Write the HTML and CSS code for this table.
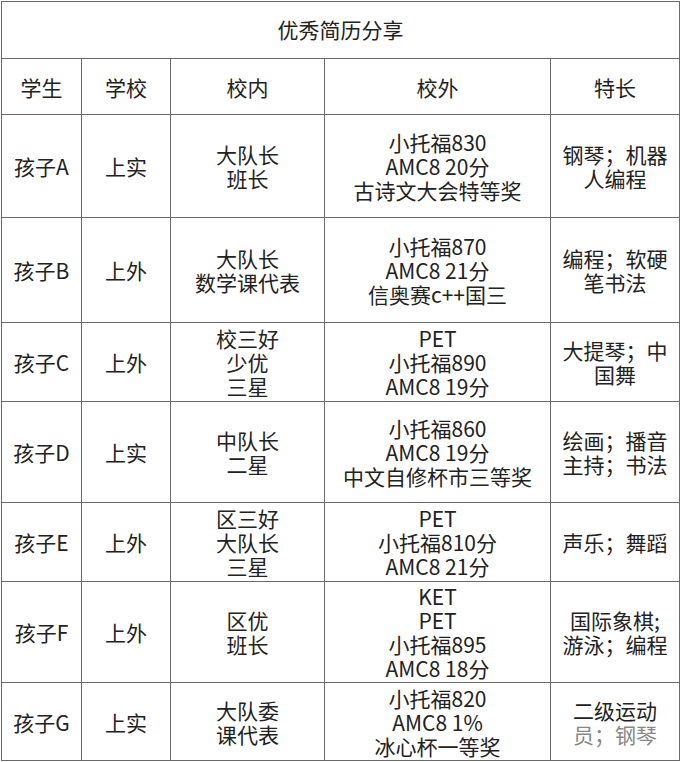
FILE: index.html
```html
<!DOCTYPE html>
<html lang="zh-CN">
<head>
<meta charset="utf-8">
<title>优秀简历分享</title>
<link rel="stylesheet" href="styles.css">
</head>
<body>
<table class="resume">
  <colgroup>
    <col class="c1"><col class="c2"><col class="c3"><col class="c4"><col class="c5">
  </colgroup>
  <tr class="r-title"><td colspan="5">优秀简历分享</td></tr>
  <tr class="r-head"><td>学生</td><td>学校</td><td>校内</td><td>校外</td><td>特长</td></tr>
  <tr class="r-a"><td>孩子A</td><td>上实</td><td>大队长<br>班长</td><td>小托福830<br>AMC8 20分<br>古诗文大会特等奖</td><td>钢琴；机器<br>人编程</td></tr>
  <tr class="r-b"><td>孩子B</td><td>上外</td><td>大队长<br>数学课代表</td><td>小托福870<br>AMC8 21分<br>信奥赛c++国三</td><td>编程；软硬<br>笔书法</td></tr>
  <tr class="r-c"><td>孩子C</td><td>上外</td><td>校三好<br>少优<br>三星</td><td>PET<br>小托福890<br>AMC8 19分</td><td>大提琴；中<br>国舞</td></tr>
  <tr class="r-d"><td>孩子D</td><td>上实</td><td>中队长<br>二星</td><td>小托福860<br>AMC8 19分<br>中文自修杯市三等奖</td><td>绘画；播音<br>主持；书法</td></tr>
  <tr class="r-e"><td>孩子E</td><td>上外</td><td>区三好<br>大队长<br>三星</td><td>PET<br>小托福810分<br>AMC8 21分</td><td>声乐；舞蹈</td></tr>
  <tr class="r-f"><td>孩子F</td><td>上外</td><td>区优<br>班长</td><td>KET<br>PET<br>小托福895<br>AMC8 18分</td><td>国际象棋;<br>游泳；编程</td></tr>
  <tr class="r-g"><td>孩子G</td><td>上实</td><td>大队委<br>课代表</td><td>小托福820<br>AMC8 1%<br>冰心杯一等奖</td><td>二级运动<br><span class="faded">员；钢琴</span></td></tr>
</table>
</body>
</html>
```

FILE: styles.css
```css
html, body {
  margin: 0;
  padding: 0;
  background: #ffffff;
}

body {
  padding: 1px 0 0 1px;
  font-family: "Noto Sans CJK SC", "Noto Sans", sans-serif;
  color: #222222;
}

.resume {
  border-collapse: collapse;
  table-layout: fixed;
  width: 678px;
  font-size: 21px;
  line-height: 24px;
}

.c1 { width: 80px; }
.c2 { width: 89px; }
.c3 { width: 154px; }
.c4 { width: 226px; }
.c5 { width: 129px; }

.resume td {
  border: 1px solid #6a6a6a;
  text-align: center;
  vertical-align: middle;
  padding: 0 4px;
  white-space: nowrap;
}

.r-title td { height: 54px; padding-bottom: 2px; }
.r-head td { height: 55px; }
.r-a td { height: 102px; }
.r-b td { height: 104px; }
.r-c td { height: 78px; }
.r-d td { height: 100px; }
.r-e td { height: 78px; }
.r-f td { height: 100px; }
.r-g td { height: 77px; }

.faded {
  color: #555555;
  opacity: 0.7;
}
```
